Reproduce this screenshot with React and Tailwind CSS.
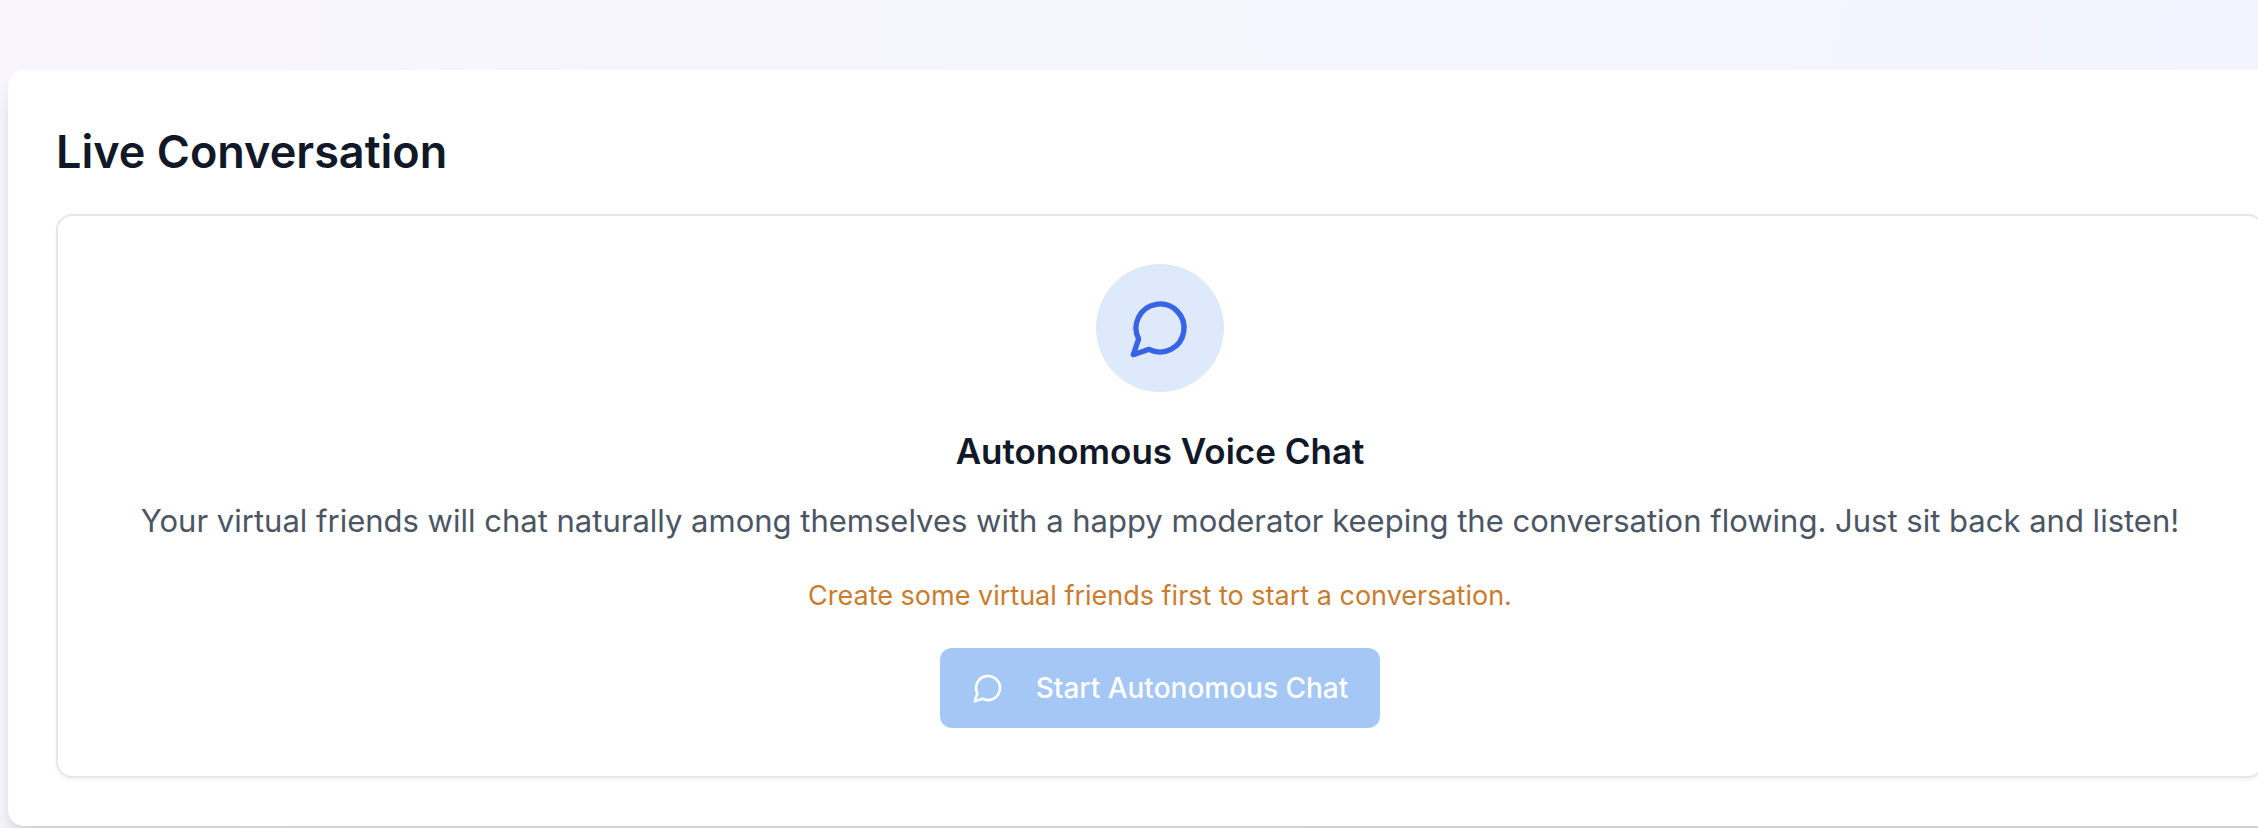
function ChatBubble({ className }) {
  return (
    <svg
      className={className}
      viewBox="0 0 24 24"
      fill="none"
      stroke="currentColor"
      strokeWidth="2"
      strokeLinecap="round"
      strokeLinejoin="round"
      aria-hidden="true"
    >
      <path d="M7.9 20A9 9 0 1 0 4 16.1L2 22Z" />
    </svg>
  );
}

export default function App() {
  return (
    <main className="min-h-screen overflow-hidden bg-linear-105 from-[#f9f5fc] via-[#f6f5fe] via-25% to-[#f2f4ff] pt-[70px] pb-[2px] pl-2 font-['Inter','Liberation_Sans',sans-serif] text-[#111827]">
      <section className="-mr-[54px] rounded-2xl bg-white p-12 shadow-[0_20px_30px_-6px_rgba(0,0,0,0.1),0_8px_12px_-4px_rgba(0,0,0,0.1)]">
        <h2 className="mb-7 text-[45px] leading-[68px] font-semibold">Live Conversation</h2>
        <div className="flex flex-col items-center rounded-2xl border-2 border-[#e5e7eb] bg-white p-12 text-center shadow-[0_2px_4px_rgba(0,0,0,0.05)]">
          <div className="mb-8 flex size-32 items-center justify-center rounded-full bg-[#dee9fb] text-[#3763e4]">
            <ChatBubble className="size-16" />
          </div>
          <h3 className="mb-[18px] text-[35px] leading-[54px] font-semibold">Autonomous Voice Chat</h3>
          <p className="mb-[30px] text-[31px] leading-[50px] text-[#4b5563]">
            Your virtual friends will chat naturally among themselves with a happy moderator keeping the conversation
            flowing. Just sit back and listen!
          </p>
          <p className="mb-8 text-[27px] leading-[40px] text-[#ca7c2e]">
            Create some virtual friends first to start a conversation.
          </p>
          <button
            type="button"
            disabled
            className="flex h-20 items-center gap-8 rounded-xl bg-[#a4c7f5] px-8 text-[28px] leading-[40px] font-medium text-white"
          >
            <ChatBubble className="size-8" />
            Start Autonomous Chat
          </button>
        </div>
      </section>
    </main>
  );
}
